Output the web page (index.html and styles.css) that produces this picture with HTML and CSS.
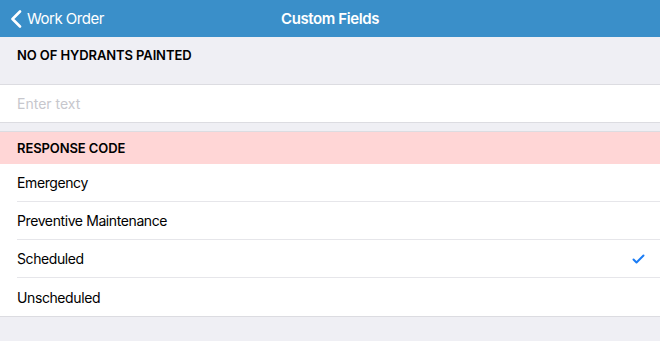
FILE: index.html
```html
<!DOCTYPE html>
<html lang="en">
<head>
    <meta charset="UTF-8">
    <meta name="viewport" content="width=device-width, initial-scale=1.0">
    <title>Custom Fields</title>
    <link rel="stylesheet" href="styles.css">
</head>
<body>
    <header class="nav-bar">
        <a class="back-link" href="#">
            <svg class="back-icon" width="12" height="18" viewBox="0 0 12 18">
                <path d="M10 1.5 L2.5 9 L10 16.5" fill="none" stroke="#fff" stroke-width="2.6" stroke-linecap="round" stroke-linejoin="round"/>
            </svg>
            <span>Work Order</span>
        </a>
        <h1 class="nav-title">Custom Fields</h1>
    </header>

    <div class="section-header">NO OF HYDRANTS PAINTED</div>
    <div class="group">
        <input class="text-input" type="text" placeholder="Enter text">
    </div>

    <div class="section-header required">RESPONSE CODE</div>
    <ul class="group option-list">
        <li class="option">Emergency</li>
        <li class="option">Preventive Maintenance</li>
        <li class="option selected">Scheduled
            <svg class="check" width="13" height="10" viewBox="0 0 13 10">
                <path d="M1.5 5.5 L4.5 8.5 L11.5 1.5" fill="none" stroke="#1a7cf5" stroke-width="2" stroke-linecap="round" stroke-linejoin="round"/>
            </svg>
        </li>
        <li class="option">Unscheduled</li>
    </ul>
</body>
</html>
```
FILE: styles.css
```css
body {
    margin: 0;
    background: #efeff4;
    font-family: Inter, "Noto Sans", sans-serif;
    color: #000;
}
.nav-bar {
    position: relative;
    height: 37px;
    background: #3a8fc9;
    display: flex;
    align-items: center;
    justify-content: center;
}
.back-link {
    position: absolute;
    left: 10px;
    top: 0;
    height: 37px;
    display: flex;
    align-items: center;
    gap: 5px;
    color: #fff;
    text-decoration: none;
    font-size: 15px;
    letter-spacing: -0.5px;
}
.nav-title {
    margin: 0;
    color: #fff;
    font-size: 15px;
    font-weight: 600;
    letter-spacing: -0.4px;
}
.section-header {
    padding: 10px 17px 0;
    height: 37px;
    font-size: 13px;
    font-weight: 600;
    letter-spacing: -0.1px;
    border-bottom: 1px solid #dcdce1;
}
.section-header.required {
    margin-top: 8px;
    height: 33px;
    padding: 0 17px;
    display: flex;
    align-items: center;
    background: #ffd6d6;
    border-bottom: none;
    border-top: 1px solid #dcdce1;
    box-sizing: border-box;
}
.group {
    background: #fff;
    border-bottom: 1px solid #dcdce1;
}
.text-input {
    display: block;
    width: 100%;
    box-sizing: border-box;
    height: 37px;
    padding: 0 17px;
    border: none;
    outline: none;
    font-family: inherit;
    font-size: 14px;
    background: transparent;
}
.text-input::placeholder {
    color: #c7c7cd;
}
.option-list {
    list-style: none;
    margin: 0;
    padding: 0;
}
.option {
    margin-left: 17px;
    padding-right: 15px;
    height: 38px;
    box-sizing: border-box;
    display: flex;
    align-items: center;
    justify-content: space-between;
    font-size: 14px;
    letter-spacing: -0.4px;
    border-bottom: 1px solid #e6e6ea;
}
.option:last-child {
    border-bottom: none;
}
```
